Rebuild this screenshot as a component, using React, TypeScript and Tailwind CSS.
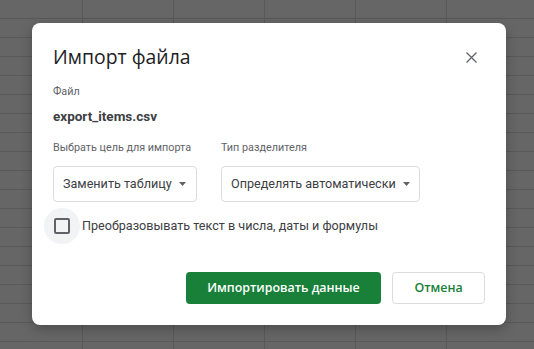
import React from "react";

function Caret() {
  return (
    <svg width="7" height="4" viewBox="0 0 7 4" className="shrink-0">
      <path d="M0 0 L7 0 L3.5 4 Z" fill="#5f6368" />
    </svg>
  );
}

function Select({ label, value, width }: { label: string; value: string; width: string }) {
  return (
    <div className="flex flex-col">
      <div className="whitespace-nowrap text-[10.8px] leading-4 text-[#5f6368]">{label}</div>
      <div
        className={`mt-[10px] flex h-9 ${width} items-center gap-[7px] rounded border border-[#dadce0] pl-[9px] text-[12.6px] text-[#3c4043]`}
      >
        <span className="whitespace-nowrap">{value}</span>
        <Caret />
      </div>
    </div>
  );
}

export default function App() {
  return (
    <div
      className="relative h-[349px] w-[534px] overflow-hidden bg-[#666666] bg-[linear-gradient(to_right,#595959_1px,transparent_1px),linear-gradient(to_bottom,#595959_1px,transparent_1px)] bg-[length:91px_19px] bg-[position:82px_18px]"
      style={{ fontFamily: "Roboto, 'Noto Sans', sans-serif" }}
    >
      <div className="absolute left-[32px] top-[23px] flex w-[474px] flex-col rounded-lg bg-white pb-[21px] pl-[21px] pr-[21px] pt-[22px] shadow-[0_4px_12px_rgba(0,0,0,0.25)]">
        <div className="flex items-center justify-between">
          <h1
            className="text-[19.4px] leading-6 text-[#202124]"
            style={{ fontFamily: "'Open Sans', Roboto, sans-serif" }}
          >
            Импорт файла
          </h1>
          <button className="mr-[2px] flex h-6 w-6 items-center justify-center">
            <svg width="11" height="11" viewBox="0 0 11 11">
              <path d="M0.5 0.5 L10.5 10.5 M10.5 0.5 L0.5 10.5" stroke="#5f6368" strokeWidth="1.3" />
            </svg>
          </button>
        </div>

        <div className="mt-[15px] text-[10.8px] leading-4 text-[#5f6368]">Файл</div>
        <div className="mt-2 text-[13.5px] font-bold leading-4 text-[#3c4043]">export_items.csv</div>

        <div className="mt-4 flex gap-[24px]">
          <Select label="Выбрать цель для импорта" value="Заменить таблицу" width="w-[144px]" />
          <Select label="Тип разделителя" value="Определять автоматически" width="w-[199px]" />
        </div>

        <div className="-ml-[9px] mt-[6px] flex items-center gap-[2px]">
          <div className="flex h-9 w-9 items-center justify-center rounded-full bg-[#f1f3f4]">
            <div className="h-4 w-4 rounded-[2px] border-2 border-[#5f6368]" />
          </div>
          <span className="text-[12.6px] text-[#3c4043]">Преобразовывать текст в числа, даты и формулы</span>
        </div>

        <div
          className="mt-[28px] flex justify-end gap-[11px] text-[12.4px] font-semibold"
          style={{ fontFamily: "'Open Sans', Roboto, sans-serif" }}
        >
          <button className="h-8 w-[195px] rounded bg-[#188038] text-white">Импортировать данные</button>
          <button className="h-8 w-[93px] rounded border border-[#dadce0] bg-white text-[#188038]">Отмена</button>
        </div>
      </div>
    </div>
  );
}
